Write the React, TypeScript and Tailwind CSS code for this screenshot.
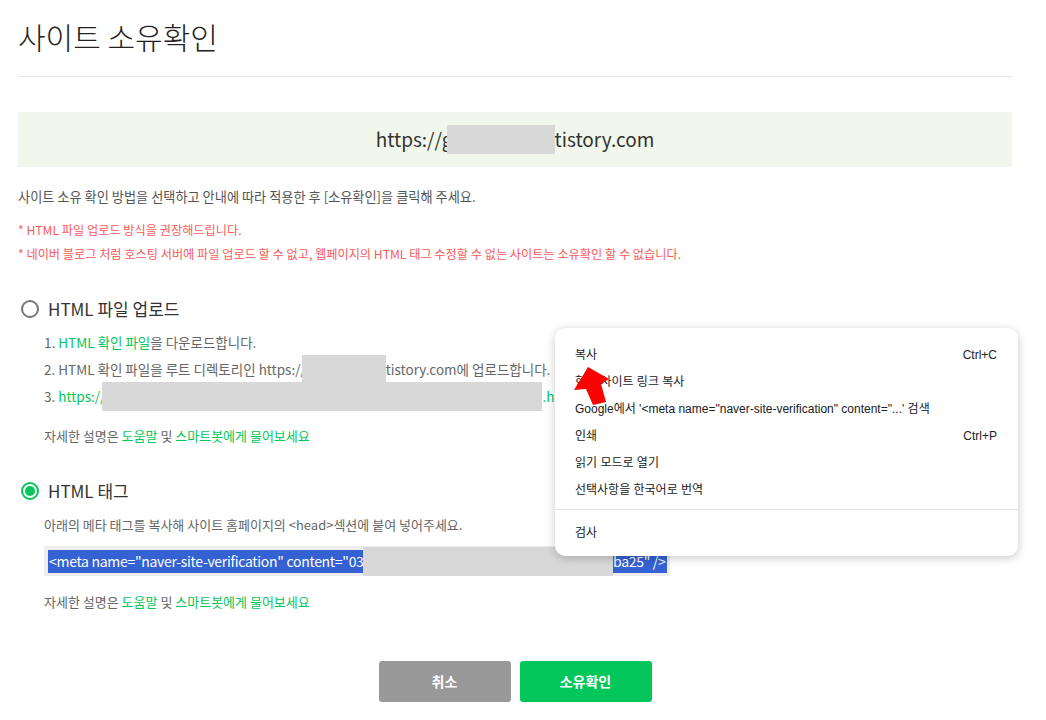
import React from "react";

function Help() {
  return (
    <div className="mt-[12px] leading-[27px] text-[13px] text-[#666]">
      자세한 설명은 <span className="text-[#03c75a]">도움말</span> 및{" "}
      <span className="text-[#03c75a]">스마트봇에게 물어보세요</span>
    </div>
  );
}

function MenuItem({ label, shortcut }: { label: string; shortcut?: string }) {
  return (
    <div className="flex h-[27px] items-center justify-between pl-[20px] pr-[21px] whitespace-nowrap">
      <span>{label}</span>
      {shortcut ? <span>{shortcut}</span> : null}
    </div>
  );
}

export default function App() {
  return (
    <div className="relative h-[720px] w-[1046px] overflow-hidden bg-white font-['Noto_Sans_CJK_KR','Noto_Sans',sans-serif]">
      <div className="w-[1012px] pl-[18px]">
        {/* title */}
        <div className="border-b border-[#e4e4e4] pb-[19px] pt-[16px] text-[30px] leading-[41px] font-light text-[#222]">
          사이트 소유확인
        </div>

        {/* url box */}
        <div className="mt-[35px] flex h-[55px] items-center justify-center bg-[#f1f7ea] text-[19px] text-[#333]">
          <span>https://g</span>
          <span className="-ml-[6px] inline-block h-[29px] w-[108px] bg-[#d8d8d8]" />
          <span>tistory.com</span>
        </div>

        {/* description */}
        <div className="mt-[20px] text-[13.2px] leading-[20px] text-[#555]">
          사이트 소유 확인 방법을 선택하고 안내에 따라 적용한 후 [소유확인]을 클릭해 주세요.
        </div>
        <div className="mt-[11px] text-[12.2px] leading-[24px] text-[#fa5a5a]">
          <div>* HTML 파일 업로드 방식을 권장해드립니다.</div>
          <div>
            * 네이버 블로그 처럼 호스팅 서버에 파일 업로드 할 수 없고, 웹페이지의 HTML 태그 수정할 수 없는 사이트는 소유확인 할 수 없습니다.
          </div>
        </div>

        {/* option 1 */}
        <div className="mt-[28px] flex h-[30px] items-center">
          <span className="ml-[3px] inline-block h-[18px] w-[18px] rounded-full border-[2px] border-[#777]" />
          <span className="ml-[9px] text-[17px] text-[#333]">HTML 파일 업로드</span>
        </div>
        <div className="ml-[26px] mt-[5px] whitespace-nowrap text-[13.5px] leading-[27px] text-[#666]">
          <div className="h-[27px]">
            1. <span className="text-[#03c75a]">HTML 확인 파일</span>을 다운로드합니다.
          </div>
          <div className="flex h-[27px] items-center">
            <span>2. HTML 확인 파일을 루트 디렉토리인 https://</span>
            <span className="inline-block h-[29px] w-[84px] shrink-0 -ml-[4px] bg-[#d8d8d8]" />
            <span>tistory.com에 업로드합니다.</span>
          </div>
          <div className="flex h-[27px] items-center">
            <span className="text-[#03c75a]">
              <span className="text-[#666]">3. </span>https://
            </span>
            <span className="inline-block h-[29px] w-[440px] shrink-0 -ml-[3px] bg-[#d8d8d8]" />
            <span className="text-[#03c75a]">.h</span>
          </div>
          <Help />
        </div>

        {/* option 2 */}
        <div className="mt-[27px] flex h-[30px] items-center">
          <span className="ml-[3px] flex h-[18px] w-[18px] items-center justify-center rounded-full border-[2px] border-[#03c75a]">
            <span className="h-[10px] w-[10px] rounded-full bg-[#03c75a]" />
          </span>
          <span className="ml-[9px] text-[17px] text-[#333]">HTML 태그</span>
        </div>
        <div className="ml-[26px] mt-[5px] text-[13px] leading-[27px] text-[#666]">
          아래의 메타 태그를 복사해 사이트 홈페이지의 &lt;head&gt;섹션에 붙여 넣어주세요.
        </div>
        <div className="ml-[26px] mt-[8px] flex h-[30px] w-[626px] items-center bg-[#eeeeee] pl-[4px]">
          <div className="flex h-[23px] w-[619px] items-center bg-[#3462d2] text-[14px] tracking-[-0.3px] text-white whitespace-nowrap">
            <span className="w-[315px] shrink-0 pl-[1px]">&lt;meta name="naver-site-verification" content="03</span>
            <span className="inline-block h-[29px] w-[250px] shrink-0 bg-[#d8d8d8]" />
            <span className="flex-1 pr-[2px] text-right">ba25" /&gt;</span>
          </div>
        </div>
        <div className="ml-[26px]">
          <Help />
        </div>

        {/* buttons */}
        <div className="mt-[46px] flex justify-center gap-[9px]">
          <button className="h-[41px] w-[132px] rounded-[3px] bg-[#999999] text-[14px] font-bold text-white">
            취소
          </button>
          <button className="h-[41px] w-[132px] rounded-[3px] bg-[#03c75a] text-[14px] font-bold text-white">
            소유확인
          </button>
        </div>
      </div>

      {/* context menu */}
      <div className="absolute left-[555px] top-[328px] h-[228px] w-[463px] rounded-[10px] bg-white pt-[13px] text-[12px] text-[#202124] shadow-[0_2px_10px_rgba(0,0,0,0.22)] font-['Liberation_Sans','Noto_Sans_CJK_KR',sans-serif]">
        <MenuItem label="복사" shortcut="Ctrl+C" />
        <MenuItem label="현재 사이트 링크 복사" />
        <MenuItem label={`Google에서 '<meta name="naver-site-verification" content="...' 검색`} />
        <MenuItem label="인쇄" shortcut="Ctrl+P" />
        <MenuItem label="읽기 모드로 열기" />
        <MenuItem label="선택사항을 한국어로 번역" />
        <div className="mt-[6px] border-t border-[#dde4ee]" />
        <div className="mt-[9px]">
          <MenuItem label="검사" />
        </div>
      </div>

      {/* red arrow */}
      <svg
        className="absolute left-[568px] top-[362px] h-[48px] w-[48px]"
        viewBox="568 362 48 48"
      >
        <polygon
          points="588,367 609,379 601,384 606,402 593,405 586,389 574,390"
          fill="#ff0000"
        />
      </svg>
    </div>
  );
}
